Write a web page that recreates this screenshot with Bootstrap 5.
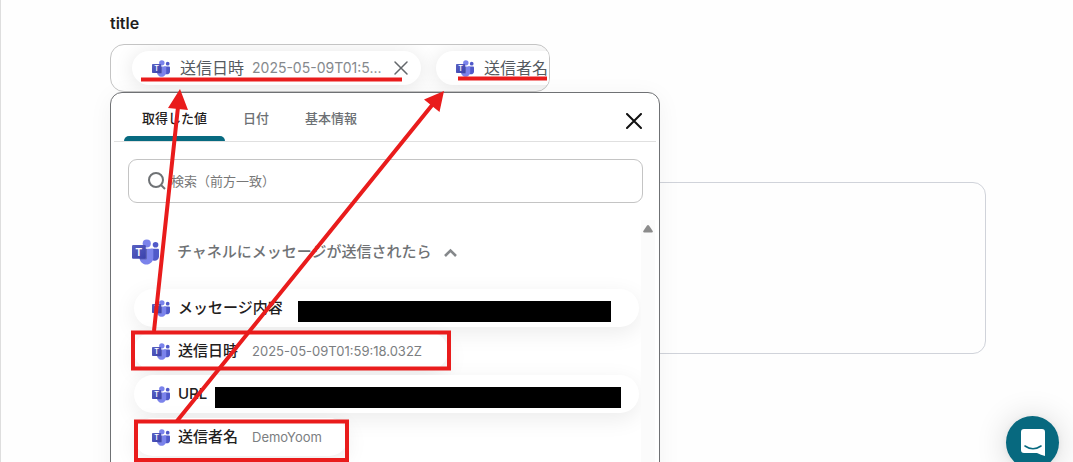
<!DOCTYPE html>
<html lang="ja">
<head>
<meta charset="utf-8">
<meta name="viewport" content="width=device-width, initial-scale=1">
<title>title</title>
<link href="https://cdn.jsdelivr.net/npm/bootstrap@5.3.0/dist/css/bootstrap.min.css" rel="stylesheet">
<style>
  body { font-family: Inter, "Noto Sans CJK JP", sans-serif; font-size: 16px; line-height: 24px; color: #1f2020; background: #fefefe; }
  .page { border-left: 1px solid #dedede; padding: 11px 87px 0 109px; }
  .field-label { font-size: 16px; font-weight: 600; margin-bottom: 9px; }
  .token-box { width: 440px; height: 48px; border: 1px solid #c4c4c4; border-radius: 14px; padding-left: 21px; gap: 15px; background: #fff; }
  .token { height: 34px; padding: 0 12px 0 20px; border-radius: 17px; background: #fff; color: #555a60; box-shadow: 0 2px 20px rgba(0,0,0,.11); }
  .token-long { padding-right: 40px; }
  .token .val { font-size: 14px; color: #85898d; width: 133px; margin: 0 8px 0 8px; white-space: nowrap; text-align: left; }
  .logo-sm { width: 18px; height: 17px; margin-right: 10px; }
  .picker { top: 48px; left: 0; width: 550px; background: #fff; border: 1px solid #6f7174; border-radius: 12px; box-shadow: 0 4px 24px rgba(0,0,0,.05); }
  .picker-head { height: 49px; margin: 0 3px; padding: 0 14px 0 10px; border-bottom: 1px solid #e0e0e0; }
  .tab-btn { font-size: 13px; font-weight: 500; color: #6c7074; padding: 8px 18px 0; border-bottom: 5px solid transparent; }
  .tab-btn.active { color: #1f2020; position: relative; font-weight: 500; border-color: transparent; }
  .tab-btn.active::after { content: ""; position: absolute; left: 0; right: 0; bottom: -5px; height: 5px; background: #076a80; border-radius: 5px 5px 0 0; }
  .search { height: 44px; margin: 17px 16px 0 17px; padding: 0 16px 0 18px; border: 1px solid #c4c4c4; border-radius: 9px; }
  .search input { font-size: 13px; margin-left: 4px; outline: 0; }
  .search input::placeholder { color: #777; opacity: 1; }
  .results { margin-top: 17px; }
  .list-col { padding: 0 2px 40px 23px; overflow: hidden; min-width: 0; }
  .group-btn { font-size: 15px; line-height: 24px; color: #6f7275; font-weight: 500; margin: 19px 0 24px -2px; }
  .group-btn .logo-lg { width: 27px; height: 26px; margin-right: 18px; }
  .pill-list { gap: 5px; }
  .pill { height: 38px; padding: 0 26px 0 18px; border-radius: 19px; background: #fff; font-size: 15px; font-weight: 500; color: #1f2020; box-shadow: 0 6px 22px rgba(0,0,0,.08); }
  .pill .logo-sm { margin-right: 8px; }
  .pill .val { font-size: 13px; font-weight: 400; color: #7b7e81; margin: 2px 0 0 14px; }
  .redacted { background: #000; height: 21px; margin: 6px 0 0 15px; }
  .redacted-near { margin-left: 8px; }
  .track { width: 14px; margin-right: 4px; background: #fbfbfb; padding-top: 5px; }
  .big-field { height: 172px; margin-top: 90px; border: 1px solid #d0d3da; border-radius: 13px; resize: none; background: #fefefe; }
  .chat { width: 53px; height: 53px; right: 14px; bottom: -7px; background: #07697f; box-shadow: 0 1px 6px rgba(0,0,0,.06), 0 2px 32px rgba(0,0,0,.16); }
  .marks { top: 0; left: 0; pointer-events: none; z-index: 20; }
</style>
<script src="https://cdn.jsdelivr.net/npm/bootstrap@5.3.0/dist/js/bootstrap.bundle.min.js"></script>
</head>
<body>
<svg width="0" height="0" class="position-absolute" aria-hidden="true">
  <defs>
    <linearGradient id="tg" x1="0" y1="0" x2="1" y2="1"><stop offset="0" stop-color="#5a62c3"/><stop offset="1" stop-color="#3940ab"/></linearGradient>
    <symbol id="teams" viewBox="0 0 2229 2074">
      <path fill="#5059c9" d="M1555 777h575c55 0 99 45 99 99v524c0 200-162 362-362 362h-2c-200 0-362-162-362-362V829c0-29 23-52 52-52z"/>
      <circle fill="#5059c9" cx="1944" cy="441" r="233"/>
      <circle fill="#7b83eb" cx="1218" cy="337" r="337"/>
      <path fill="#7b83eb" d="M1667 777H717c-54 2-96 46-95 100v598c-8 323 248 590 570 598 323-8 578-275 570-598V877c2-54-41-98-95-100z"/>
      <path fill="#000" opacity=".22" d="M622 777h613v773c0 60-48 108-108 108H650c-20-60-29-120-28-183z"/>
      <rect fill="url(#tg)" y="467" width="1137" height="1137" rx="95"/>
      <text x="568" y="1350" text-anchor="middle" font-family="Inter, sans-serif" font-size="880" font-weight="600" fill="#fff">T</text>
    </symbol>
  </defs>
</svg>

<main class="page position-relative vh-100 overflow-hidden">
  <div class="field-label" id="title-label">title</div>
  <div class="position-relative">
    <div class="token-box d-flex align-items-center overflow-hidden" role="group" aria-labelledby="title-label">
      <span class="token d-flex align-items-center flex-shrink-0">
        <svg class="logo-sm" aria-hidden="true"><use href="#teams"/></svg>送信日時
        <span class="val">2025-05-09T01:5...</span>
        <button type="button" class="btn p-0 border-0 d-flex" aria-label="削除"><svg width="16" height="16" viewBox="0 0 16 16" stroke="#63676b" stroke-width="1.5" stroke-linecap="round"><path d="M2 2l12 12M14 2L2 14"/></svg></button>
      </span>
      <span class="token token-long d-flex align-items-center flex-shrink-0">
        <svg class="logo-sm" aria-hidden="true"><use href="#teams"/></svg>送信者名
      </span>
    </div>

    <div class="picker position-absolute z-3">
      <div class="picker-head d-flex">
        <button type="button" class="tab-btn active btn rounded-0 border-top-0 border-start-0 border-end-0">取得した値</button>
        <button type="button" class="tab-btn btn rounded-0 border-top-0 border-start-0 border-end-0">日付</button>
        <button type="button" class="tab-btn btn rounded-0 border-top-0 border-start-0 border-end-0">基本情報</button>
        <button type="button" class="btn p-0 border-0 ms-auto mt-2 d-flex align-items-center" aria-label="閉じる"><svg width="16" height="16" viewBox="0 0 16 16" stroke="#111" stroke-width="2" stroke-linecap="round"><path d="M1 1l14 14M15 1L1 15"/></svg></button>
      </div>
      <label class="search d-flex align-items-center">
        <svg width="20" height="20" viewBox="0 0 20 20" fill="none" stroke="#6f7275" stroke-width="2" aria-hidden="true"><circle cx="9" cy="9" r="7"/><path d="M14 14l4 4"/></svg>
        <input class="border-0 p-0 flex-grow-1" type="text" placeholder="検索（前方一致）" aria-label="検索">
      </label>
      <div class="results d-flex">
        <div class="list-col flex-grow-1">
          <button type="button" class="group-btn btn p-0 border-0 d-flex align-items-center">
            <svg class="logo-lg" aria-hidden="true"><use href="#teams"/></svg>チャネルにメッセージが送信されたら
            <svg class="ms-2 ps-1" width="17" height="9" viewBox="0 0 13 9" fill="none" stroke="#85888b" stroke-width="2.600" aria-hidden="true"><path d="M1 8l5.500-5.500L12 8"/></svg>
          </button>
          <div class="pill-list d-flex flex-column align-items-start">
            <button type="button" class="pill btn border-0 d-flex align-items-center w-100"><svg class="logo-sm" aria-hidden="true"><use href="#teams"/></svg>メッセージ内容<span class="redacted flex-shrink-0" style="width:313px"></span></button>
            <button type="button" class="pill btn border-0 d-flex align-items-center"><svg class="logo-sm" aria-hidden="true"><use href="#teams"/></svg>送信日時<span class="val">2025-05-09T01:59:18.032Z</span></button>
            <button type="button" class="pill btn border-0 d-flex align-items-center w-100"><svg class="logo-sm flex-shrink-0" aria-hidden="true"><use href="#teams"/></svg>URL<span class="redacted redacted-near flex-shrink-0" style="width:406px"></span></button>
            <button type="button" class="pill btn border-0 d-flex align-items-center"><svg class="logo-sm" aria-hidden="true"><use href="#teams"/></svg>送信者名<span class="val">DemoYoom</span></button>
          </div>
        </div>
        <div class="track d-flex justify-content-center align-items-start flex-shrink-0" aria-hidden="true">
          <svg width="10" height="8" viewBox="0 0 10 8" fill="#8b8b8b"><path d="M4 .6q1-1 2 0l3.700 5.400q.6 1.500-1 1.500H1.300q-1.600 0-1-1.500z"/></svg>
        </div>
      </div>
    </div>
  </div>

  <textarea class="big-field d-block w-100" aria-label="本文"></textarea>

  <svg class="marks position-absolute" width="560" height="462" viewBox="0 0 560 462" fill="none" stroke="#e91c1c" stroke-width="4" aria-hidden="true">
    <g transform="translate(-1 0)">
      <path d="M141 79.500H402M458 78.500H547"/>
      <path d="M133 332.500H449V368.500H133zM136 421.500H347V460H136z"/>
      <path d="M154 331L178 107M177 421L433 104"/>
      <path fill="#e91c1c" stroke="none" d="M180 89L168 108L188 110zM444 91L424 99.500L439.500 112z"/>
    </g>
  </svg>

  <button type="button" class="chat btn p-0 border-0 rounded-circle position-absolute d-flex align-items-center justify-content-center" aria-label="チャット">
    <svg width="24" height="27" viewBox="0 0 24 27" aria-hidden="true"><path fill="#fff" d="M3 0h18q3 0 3 3v24q-4-1-8-3H3q-3 0-3-3V3q0-3 3-3z"/><path d="M4 17q8 5.500 16 0" fill="none" stroke="#07697f" stroke-width="1.600" stroke-linecap="round"/></svg>
  </button>
</main>
</body>
</html>
